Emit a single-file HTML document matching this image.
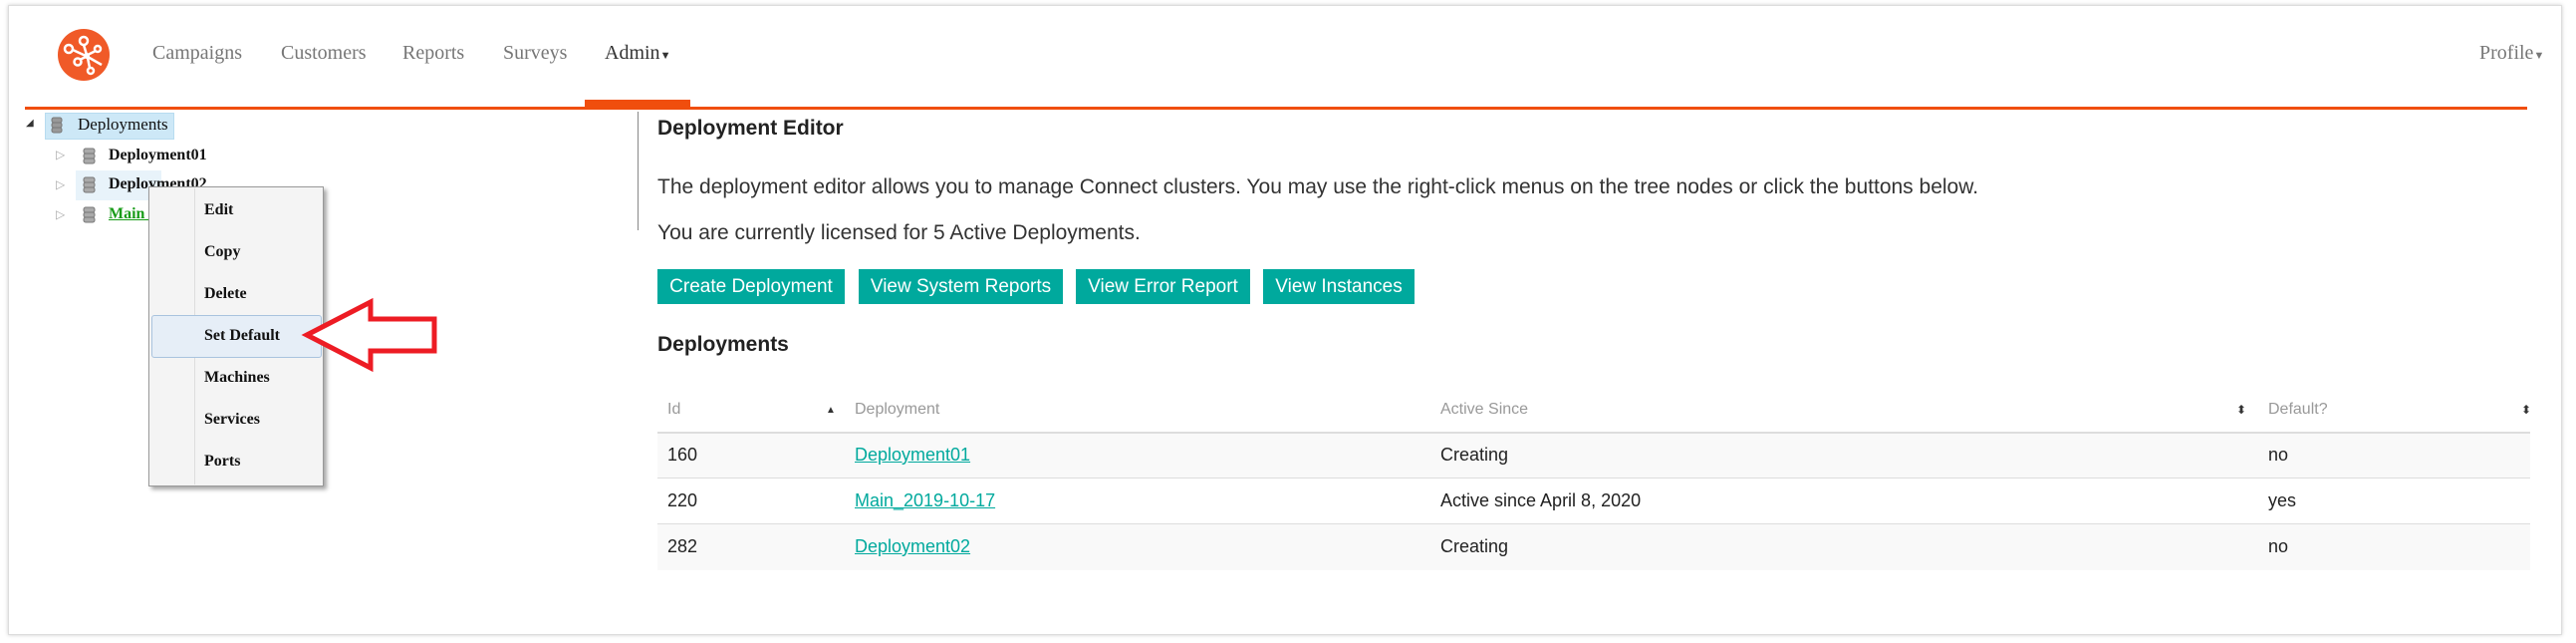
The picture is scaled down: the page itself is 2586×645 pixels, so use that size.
<!DOCTYPE html>
<html><head><meta charset="utf-8"><style>
*{margin:0;padding:0;box-sizing:border-box}
body{width:2586px;height:645px;background:#fff;position:relative;overflow:hidden;font-family:"Liberation Sans",sans-serif}
.a{position:absolute;white-space:nowrap}
.frame{position:absolute;left:8px;top:5px;width:2564px;height:632px;border:1px solid #ddd;box-shadow:0 0 4px #ccc}
.nav{font-family:"Liberation Serif",serif;font-size:20px;color:#777;top:42px}
.tree{font-family:"Liberation Serif",serif;font-size:16px;font-weight:bold;color:#111}
.menu{font-family:"Liberation Serif",serif;font-size:16px;font-weight:bold;color:#111;left:205px}
.btn{position:absolute;top:270px;height:35px;background:#00a99d;color:#fff;font-size:19px;line-height:35px;text-align:center}
.p{font-size:21px;color:#333;left:660px}
.th{font-size:16px;color:#999;top:402px}
.td{font-size:18px;color:#222}
.lk{color:#00a99d;text-decoration:underline}
.db{position:absolute;width:14px;height:18px}
</style></head><body>
<div class="frame"></div>
<svg class="a" style="left:58px;top:29px" width="52" height="52" viewBox="0 0 52 52">
<circle cx="26" cy="26" r="26" fill="#f05a28"/>
<g stroke="#fff" stroke-width="2.5" fill="none">
<circle cx="11" cy="20" r="4"/><circle cx="26" cy="12" r="4"/><circle cx="20" cy="33" r="3.5"/><circle cx="40" cy="20" r="3"/><circle cx="33" cy="42" r="3"/>
<path d="M15 21L28 27M26 16L29 26M22 31L28 28M38 22L30 26M32 39L30 29M30 28L44 36"/>
</g><circle cx="29" cy="27" r="3" fill="#fff"/></svg>
<div class="a nav" style="left:153px">Campaigns</div>
<div class="a nav" style="left:282px">Customers</div>
<div class="a nav" style="left:404px">Reports</div>
<div class="a nav" style="left:505px">Surveys</div>
<div class="a nav" style="left:607px;color:#333">Admin<span style="font-size:11px">▼</span></div>
<div class="a nav" style="left:2489px">Profile<span style="font-size:11px">▼</span></div>
<div class="a" style="left:587px;top:100px;width:106px;height:7px;background:#f04e0d"></div>
<div class="a" style="left:25px;top:107px;width:2512px;height:3px;background:#f04e0d"></div>

<div class="a" style="left:26px;top:118px;font-size:10px;color:#333">◢</div>
<div class="a" style="left:45px;top:113px;width:130px;height:27px;background:#cde8f7;border:1px solid #b8dcf0"></div>
<svg class="db" style="left:51px;top:117px" viewBox="0 0 14 18"><g fill="#999" stroke="#777"><rect x="1" y="1" width="10" height="5" rx="2"/><rect x="1" y="6" width="10" height="5" rx="2"/><rect x="1" y="11" width="10" height="5" rx="2"/></g></svg>
<div class="a tree" style="left:78px;top:115px;font-weight:normal;font-size:17px">Deployments</div>
<div class="a" style="left:56px;top:148px;font-size:12px;color:#aaa">▷</div>
<svg class="db" style="left:83px;top:148px" viewBox="0 0 14 18"><g fill="#aaa" stroke="#777"><rect x="1" y="1" width="11" height="5" rx="2"/><rect x="1" y="6" width="11" height="5" rx="2"/><rect x="1" y="11" width="11" height="5" rx="2"/></g></svg>
<div class="a tree" style="left:109px;top:147px">Deployment01</div>
<div class="a" style="left:76px;top:171px;width:86px;height:30px;background:#e8f3fa"></div>
<div class="a" style="left:56px;top:178px;font-size:12px;color:#aaa">▷</div>
<svg class="db" style="left:83px;top:177px" viewBox="0 0 14 18"><g fill="#aaa" stroke="#777"><rect x="1" y="1" width="11" height="5" rx="2"/><rect x="1" y="6" width="11" height="5" rx="2"/><rect x="1" y="11" width="11" height="5" rx="2"/></g></svg>
<div class="a tree" style="left:109px;top:176px">Deployment02</div>
<div class="a" style="left:56px;top:208px;font-size:12px;color:#aaa">▷</div>
<svg class="db" style="left:83px;top:207px" viewBox="0 0 14 18"><g fill="#aaa" stroke="#777"><rect x="1" y="1" width="11" height="5" rx="2"/><rect x="1" y="6" width="11" height="5" rx="2"/><rect x="1" y="11" width="11" height="5" rx="2"/></g></svg>
<div class="a tree" style="left:109px;top:206px;color:#1a9c1a;text-decoration:underline">Main_2019</div>

<div class="a" style="left:149px;top:187px;width:176px;height:301px;background:#f4f4f4;border:1px solid #999;box-shadow:3px 3px 4px rgba(0,0,0,.35)"></div>
<div class="a" style="left:195px;top:189px;width:1px;height:297px;background:#ddd"></div>
<div class="a" style="left:152px;top:316px;width:171px;height:43px;background:#e6eef7;border:1px solid #a9c3de;border-radius:3px"></div>
<div class="a menu" style="top:202px">Edit</div>
<div class="a menu" style="top:244px">Copy</div>
<div class="a menu" style="top:286px">Delete</div>
<div class="a menu" style="top:328px">Set Default</div>
<div class="a menu" style="top:370px">Machines</div>
<div class="a menu" style="top:412px">Services</div>
<div class="a menu" style="top:454px">Ports</div>
<svg class="a" style="left:0;top:0" width="460" height="400"><path d="M308 336L372 303L372 320L436 320L436 352L372 352L372 369Z" fill="#fff" stroke="#ed1c24" stroke-width="5"/></svg>

<div class="a" style="left:640px;top:112px;width:1px;height:119px;background:#888"></div>
<div class="a" style="left:660px;top:117px;font-size:21px;font-weight:bold;color:#222">Deployment Editor</div>
<div class="a p" style="top:176px">The deployment editor allows you to manage Connect clusters. You may use the right-click menus on the tree nodes or click the buttons below.</div>
<div class="a p" style="top:222px">You are currently licensed for 5 Active Deployments.</div>
<div class="btn" style="left:660px;width:188px">Create Deployment</div>
<div class="btn" style="left:862px;width:205px">View System Reports</div>
<div class="btn" style="left:1080px;width:175px">View Error Report</div>
<div class="btn" style="left:1268px;width:152px">View Instances</div>
<div class="a" style="left:660px;top:334px;font-size:21px;font-weight:bold;color:#222">Deployments</div>

<div class="a th" style="left:670px">Id</div>
<div class="a th" style="left:829px;font-size:10px;top:406px;color:#333">▲</div>
<div class="a th" style="left:858px">Deployment</div>
<div class="a th" style="left:1446px">Active Since</div>
<div class="a th" style="left:2245px;font-size:12px;color:#333;top:404px">⬍</div>
<div class="a th" style="left:2277px">Default?</div>
<div class="a th" style="left:2531px;font-size:12px;color:#333;top:404px">⬍</div>
<div class="a" style="left:660px;top:433px;width:1880px;height:2px;background:#ddd"></div>
<div class="a" style="left:660px;top:435px;width:1880px;height:45px;background:#f9f9f9;border-bottom:1px solid #ddd"></div>
<div class="a" style="left:660px;top:480px;width:1880px;height:46px;background:#fff;border-bottom:1px solid #ddd"></div>
<div class="a" style="left:660px;top:526px;width:1880px;height:46px;background:#f9f9f9"></div>
<div class="a td" style="left:670px;top:446px">160</div>
<div class="a td lk" style="left:858px;top:446px">Deployment01</div>
<div class="a td" style="left:1446px;top:446px">Creating</div>
<div class="a td" style="left:2277px;top:446px">no</div>
<div class="a td" style="left:670px;top:492px">220</div>
<div class="a td lk" style="left:858px;top:492px">Main_2019-10-17</div>
<div class="a td" style="left:1446px;top:492px">Active since April 8, 2020</div>
<div class="a td" style="left:2277px;top:492px">yes</div>
<div class="a td" style="left:670px;top:538px">282</div>
<div class="a td lk" style="left:858px;top:538px">Deployment02</div>
<div class="a td" style="left:1446px;top:538px">Creating</div>
<div class="a td" style="left:2277px;top:538px">no</div>
</body></html>
